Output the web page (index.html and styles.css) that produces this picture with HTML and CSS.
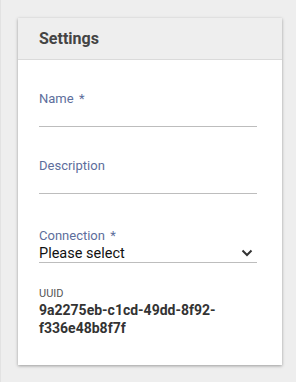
FILE: index.html
```html
<!DOCTYPE html>
<html lang="en">
<head>
    <meta charset="UTF-8">
    <title>Settings</title>
    <link rel="stylesheet" href="styles.css">
</head>
<body>
<div class="page">
    <div class="card">
        <div class="card-header">Settings</div>
        <div class="card-body">
            <div class="field">
                <label class="field-label">Name <span class="req">*</span></label>
                <div class="field-input"></div>
            </div>
            <div class="field">
                <label class="field-label">Description</label>
                <div class="field-input"></div>
            </div>
            <div class="field field-last">
                <label class="field-label">Connection <span class="req">*</span></label>
                <div class="field-select">
                    <span>Please select</span>
                    <svg width="12" height="8" viewBox="0 0 12 8"><path d="M1.5 1.5 L6 6 L10.5 1.5" fill="none" stroke="#333" stroke-width="2"/></svg>
                </div>
            </div>
            <div class="uuid">
                <div class="uuid-label">UUID</div>
                <div class="uuid-value">9a2275eb-c1cd-49dd-8f92-f336e48b8f7f</div>
            </div>
        </div>
    </div>
</div>
</body>
</html>
```

FILE: styles.css
```css
html, body { margin: 0; padding: 0; }
body { background: #eeeeee; font-family: Roboto, "Noto Sans", Arial, sans-serif; }
.page {
    border-left: 1px solid #e2e2e2;
    padding: 18px 14px 19px 17px;
    min-height: 345px;
}
.card {
    background: #fff;
    box-shadow: 0 1px 3px rgba(0, 0, 0, 0.35);
}
.card-header {
    background: #eeeeee;
    border-bottom: 1px solid #dadada;
    height: 41px; line-height: 41px;
    padding-left: 21px;
    font-size: 16px; font-weight: bold; color: #444;
}
.card-body { padding: 31px 25px 28px 21px; }
.field { margin-bottom: 34px; }
.field:first-child { margin-bottom: 31px; }
.field-last { margin-bottom: 24px; }
.field-label { display: block; font-size: 13px; line-height: 16px; color: #5d6e9c; }
.req { margin-left: 2px; }
.field-input { height: 19px; border-bottom: 1px solid #bdbdbd; }
.field-select {
    height: 18px; border-bottom: 1px solid #bdbdbd;
    display: flex; align-items: center; justify-content: space-between;
    font-size: 14.5px; color: #111;
    padding-right: 4px;
}
.uuid-label { font-size: 11px; line-height: 14px; color: #555; }
.uuid-value { font-size: 14px; line-height: 18px; font-weight: bold; color: #333; }
```
